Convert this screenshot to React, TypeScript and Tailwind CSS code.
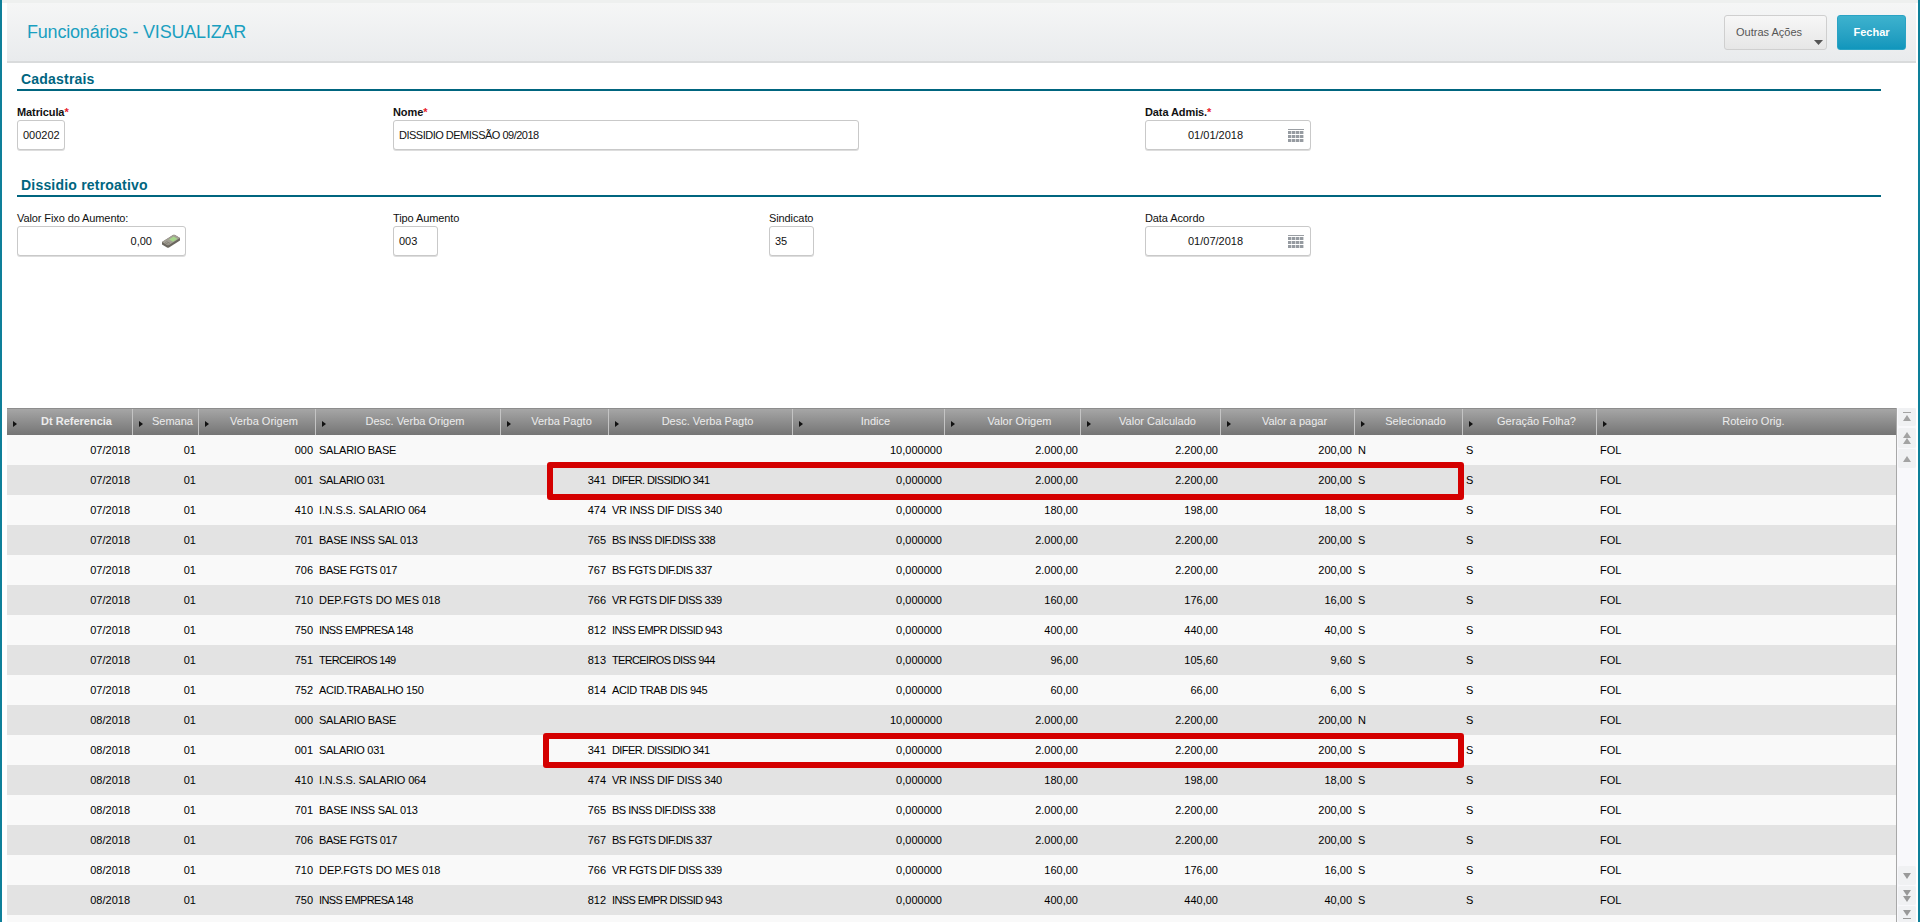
const colWidths = [126, 66, 117, 185, 108, 184, 152, 136, 140, 134, 108, 134, 299];

const headers = [
  "Dt Referencia",
  "Semana",
  "Verba Origem",
  "Desc. Verba Origem",
  "Verba Pagto",
  "Desc. Verba Pagto",
  "Indice",
  "Valor Origem",
  "Valor Calculado",
  "Valor a pagar",
  "Selecionado",
  "Geração Folha?",
  "Roteiro Orig.",
];

const leftCols = [3, 5, 10, 11, 12];

// the reference has hinted caps that run narrower than Liberation Sans
const narrowText: Record<string, string> = {
  "SALARIO BASE": "tracking-[-0.25px]",
  "SALARIO 031": "tracking-[-0.3px]",
  "I.N.S.S. SALARIO 064": "tracking-[-0.15px]",
  "BASE INSS SAL 013": "tracking-[-0.25px]",
  "BASE FGTS 017": "tracking-[-0.4px]",
  "INSS EMPRESA 148": "tracking-[-0.6px]",
  "TERCEIROS 149": "tracking-[-0.7px]",
  "ACID.TRABALHO 150": "tracking-[-0.33px]",
  "DIFER. DISSIDIO 341": "tracking-[-0.6px]",
  "VR INSS DIF DISS 340": "tracking-[-0.25px]",
  "BS INSS DIF.DISS 338": "tracking-[-0.5px]",
  "BS FGTS DIF.DIS 337": "tracking-[-0.5px]",
  "VR FGTS DIF DISS 339": "tracking-[-0.45px]",
  "INSS EMPR DISSID 943": "tracking-[-0.6px]",
  "TERCEIROS DISS 944": "tracking-[-0.65px]",
  "ACID TRAB DIS 945": "tracking-[-0.35px]",
};

type Row = string[];

const base: Row[] = [
  ["000", "SALARIO BASE", "", "", "10,000000", "2.000,00", "2.200,00", "200,00", "N"],
  ["001", "SALARIO 031", "341", "DIFER. DISSIDIO 341", "0,000000", "2.000,00", "2.200,00", "200,00", "S"],
  ["410", "I.N.S.S. SALARIO 064", "474", "VR INSS DIF DISS 340", "0,000000", "180,00", "198,00", "18,00", "S"],
  ["701", "BASE INSS SAL 013", "765", "BS INSS DIF.DISS 338", "0,000000", "2.000,00", "2.200,00", "200,00", "S"],
  ["706", "BASE FGTS 017", "767", "BS FGTS DIF.DIS 337", "0,000000", "2.000,00", "2.200,00", "200,00", "S"],
  ["710", "DEP.FGTS DO MES 018", "766", "VR FGTS DIF DISS 339", "0,000000", "160,00", "176,00", "16,00", "S"],
  ["750", "INSS EMPRESA 148", "812", "INSS EMPR DISSID 943", "0,000000", "400,00", "440,00", "40,00", "S"],
  ["751", "TERCEIROS 149", "813", "TERCEIROS DISS 944", "0,000000", "96,00", "105,60", "9,60", "S"],
  ["752", "ACID.TRABALHO 150", "814", "ACID TRAB DIS 945", "0,000000", "60,00", "66,00", "6,00", "S"],
];

const rows: Row[] = [
  ...base.map((r) => ["07/2018", "01", ...r, "S", "FOL"]),
  ...base.slice(0, 7).map((r) => ["08/2018", "01", ...r, "S", "FOL"]),
  ["", "", "", "", "", "", "", "", "", "", "", "", ""],
];

function Triangle() {
  return (
    <svg width="4" height="6" viewBox="0 0 4 6" className="absolute left-[6px] top-[12px]">
      <path d="M0 0 L4 3 L0 6 Z" fill="#111" />
    </svg>
  );
}

function CalendarIcon() {
  return (
    <svg width="16" height="13" viewBox="0 0 16 13" className="mr-[1px] shrink-0">
      <rect x="0" y="0" width="16" height="1" fill="#9a9ea3" />
      {[0, 1, 2].map((r) =>
        [0, 1, 2, 3].map((c) => (
          <rect key={`${r}-${c}`} x={c * 4} y={2 + r * 4} width="3.4" height="3" fill="#969ba1" />
        ))
      )}
    </svg>
  );
}

function MoneyIcon() {
  return (
    <svg width="20" height="14" viewBox="0 0 20 14" className="-mr-[1px] shrink-0">
      <path d="M1 8 L12 1 Q13 0.5 14 1 L19 4 L19 6.5 L8 13.5 Q7 14 6 13.5 L1 10.5 Z" fill="#6a665e" />
      <path d="M1 8 L12 1 Q13 0.5 14 1 L19 4 L8 11 Q7 11.5 6 11 Z" fill="#a39f95" />
      <path d="M8 5.5 L12.5 2.6 L16.5 4.8 L12 7.8 Z" fill="#a5d68a" />
      <path d="M4 8.6 L7.5 10.4 M5.5 7.6 L9 9.4" stroke="#7b776c" strokeWidth="0.8" />
    </svg>
  );
}

function Field({
  label,
  required,
  bold,
  className,
  children,
}: {
  label: string;
  required?: boolean;
  bold?: boolean;
  className: string;
  children: React.ReactNode;
}) {
  return (
    <div className={className}>
      <div className={`h-[16px] whitespace-nowrap text-[11px] leading-[16px] tracking-[-0.1px] text-[#111] ${bold ? "font-bold" : ""}`}>
        {label}
        {required && <span className="font-bold text-[#e8202a]">*</span>}
      </div>
      <div className="flex h-[30px] items-center rounded-[3px] border border-[#c9c9c9] bg-white px-[5px] text-[11px] text-[#111] shadow-[0_1px_0_#ddd]">
        {children}
      </div>
    </div>
  );
}

function SectionTitle({ title }: { title: string }) {
  return (
    <div className="mr-[37px] h-[28px] border-b-2 border-[#00657f] pl-[4px] pt-[5px] text-[14px] font-bold leading-[22px] tracking-[0.2px] text-[#00657f]">
      {title}
    </div>
  );
}

type ScrollKind = "top" | "upup" | "up" | "down" | "downdown" | "bottom";

function ScrollButton({ kind, className }: { kind: ScrollKind; className: string }) {
  const up = "M0 6 H8 L4 0 Z";
  const down = "M0 0 H8 L4 6 Z";
  return (
    <div className={`flex w-[18px] items-center justify-center rounded-[2px] bg-[#f0f1f3] ${className}`}>
      <svg width="8" height="14" viewBox="0 0 8 14">
        {kind === "top" && (
          <>
            <rect x="0" y="2" width="8" height="1" fill="#a3a3a3" />
            <g transform="translate(0 5)">
              <path d={up} fill="#a3a3a3" />
            </g>
          </>
        )}
        {kind === "upup" && (
          <>
            <g transform="translate(0 1)">
              <path d={up} fill="#a3a3a3" />
            </g>
            <g transform="translate(0 7)">
              <path d={up} fill="#a3a3a3" />
            </g>
          </>
        )}
        {kind === "up" && (
          <g transform="translate(0 4)">
            <path d={up} fill="#a3a3a3" />
          </g>
        )}
        {kind === "down" && (
          <g transform="translate(0 4)">
            <path d={down} fill="#999" />
          </g>
        )}
        {kind === "downdown" && (
          <>
            <g transform="translate(0 1)">
              <path d={down} fill="#999" />
            </g>
            <g transform="translate(0 7)">
              <path d={down} fill="#999" />
            </g>
          </>
        )}
        {kind === "bottom" && (
          <>
            <g transform="translate(0 3)">
              <path d={down} fill="#999" />
            </g>
            <rect x="0" y="11" width="8" height="1" fill="#999" />
          </>
        )}
      </svg>
    </div>
  );
}

export default function App() {
  return (
    <div className="h-[922px] w-[1920px] overflow-hidden border-x-2 border-[#0e7f99] bg-white font-['Liberation_Sans',Arial,sans-serif]">
      <div className="h-[3px] bg-[#eef0ef]" />
      <div className="ml-[5px] mr-[2px] flex h-[60px] items-start justify-between border-b-2 border-[#d9dbdc] bg-gradient-to-b from-[#f5f6f6] to-[#e9ebed] pt-[12px]">
        <h1 className="mt-[6px] pl-[20px] text-[18px] leading-[22px] tracking-[-0.2px] text-[#1a9fc0]">Funcionários - VISUALIZAR</h1>
        <div className="mr-[10px] flex gap-[10px]">
          <button className="relative h-[35px] w-[103px] rounded-[3px] border border-[#cfcfcf] bg-gradient-to-b from-[#f7f7f7] to-[#e6e6e6] pb-[1px] pl-[11px] text-left text-[11px] text-[#555]">
            Outras Ações
            <svg width="9" height="5" viewBox="0 0 9 5" className="absolute bottom-[4px] right-[3px]">
              <path d="M0 0 H9 L4.5 5 Z" fill="#555" />
            </svg>
          </button>
          <button className="h-[35px] w-[69px] rounded-[3px] border border-[#2aa3c4] bg-gradient-to-b from-[#3db2ce] to-[#1096bc] pb-[1px] text-[11px] font-bold text-white">
            Fechar
          </button>
        </div>
      </div>

      <div className="pl-[15px]">
        <SectionTitle title="Cadastrais" />
        <div className="mt-[13px] flex h-[49px]">
          <Field label="Matricula" required bold className="w-[48px]">
            000202
          </Field>
          <Field label="Nome" required bold className="ml-[328px] w-[466px]">
            <span className="tracking-[-0.5px]">DISSIDIO DEMISSÃO 09/2018</span>
          </Field>
          <Field label="Data Admis." required bold className="ml-[286px] w-[166px]">
            <span className="flex-1 pl-[37px]">01/01/2018</span>
            <CalendarIcon />
          </Field>
        </div>
        <div className="mt-[16px]">
          <SectionTitle title="Dissidio retroativo" />
        </div>
        <div className="mt-[13px] flex h-[49px]">
          <Field label="Valor Fixo do Aumento:" className="w-[169px]">
            <span className="flex-1 pr-[9px] text-right">0,00</span>
            <MoneyIcon />
          </Field>
          <Field label="Tipo Aumento" className="ml-[207px] w-[45px]">
            003
          </Field>
          <Field label="Sindicato" className="ml-[331px] w-[45px]">
            35
          </Field>
          <Field label="Data Acordo" className="ml-[331px] w-[166px]">
            <span className="flex-1 pl-[37px]">01/07/2018</span>
            <CalendarIcon />
          </Field>
        </div>
      </div>

      <div className="mt-[149px] flex pl-[5px]">
        <div className="relative w-[1889px]">
          <div className="flex h-[27px] border-t border-[#8d8d8d] bg-gradient-to-b from-[#a6a6a6] to-[#757575]">
            {headers.map((h, i) => (
              <div
                key={h}
                style={{ width: colWidths[i] }}
                className={`relative shrink-0 whitespace-nowrap pl-[14px] text-center text-[11px] leading-[25px] text-[#ececec] ${i < 12 ? "border-r border-[#c4c4c4]" : ""} ${i === 0 ? "font-bold" : ""}`}
              >
                <Triangle />
                {h}
              </div>
            ))}
          </div>
          {rows.map((row, r) => (
            <div key={r} className={`flex h-[30px] ${r % 2 === 0 ? "bg-[#f9f9f9]" : "bg-[#e3e3e3]"}`}>
              {row.map((cell, c) => (
                <div
                  key={c}
                  style={{ width: colWidths[c] }}
                  className={`shrink-0 whitespace-nowrap px-[3px] text-[11px] leading-[30px] text-black ${leftCols.includes(c) ? "text-left" : "text-right"} ${narrowText[cell] ?? ""}`}
                >
                  {cell}
                </div>
              ))}
            </div>
          ))}
          <div className="absolute left-[540px] top-[54px] h-[38px] w-[917px] rounded-[3px] border-[6px] border-[#d40000]" />
          <div className="absolute left-[536px] top-[325px] h-[35px] w-[921px] rounded-[3px] border-[6px] border-[#d40000]" />
        </div>
        <div className="flex h-[514px] w-[20px] flex-col border-l border-[#a8a8a8] bg-[#f8f8fb] pl-[1px]">
          <ScrollButton kind="top" className="h-[18px]" />
          <ScrollButton kind="upup" className="mt-[2px] h-[20px]" />
          <ScrollButton kind="up" className="mt-[1px] h-[19px]" />
          <div className="flex-1" />
          <ScrollButton kind="down" className="h-[19px]" />
          <ScrollButton kind="downdown" className="mt-[1px] h-[19px]" />
          <ScrollButton kind="bottom" className="mt-[1px] h-[16px]" />
        </div>
      </div>
    </div>
  );
}
